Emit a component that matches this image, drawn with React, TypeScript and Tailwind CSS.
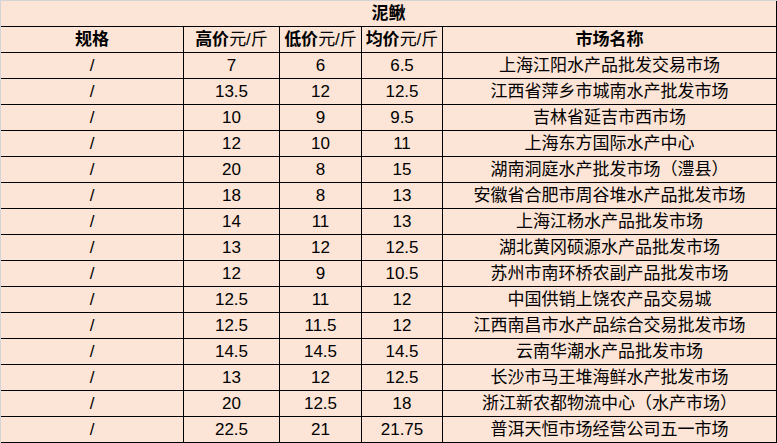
const ROWS: Array<[string, string, string, string, string]> = [
  ['/', '7', '6', '6.5', '上海江阳水产品批发交易市场'],
  ['/', '13.5', '12', '12.5', '江西省萍乡市城南水产批发市场'],
  ['/', '10', '9', '9.5', '吉林省延吉市西市场'],
  ['/', '12', '10', '11', '上海东方国际水产中心'],
  ['/', '20', '8', '15', '湖南洞庭水产批发市场（澧县）'],
  ['/', '18', '8', '13', '安徽省合肥市周谷堆水产品批发市场'],
  ['/', '14', '11', '13', '上海江杨水产品批发市场'],
  ['/', '13', '12', '12.5', '湖北黄冈硕源水产品批发市场'],
  ['/', '12', '9', '10.5', '苏州市南环桥农副产品批发市场'],
  ['/', '12.5', '11', '12', '中国供销上饶农产品交易城'],
  ['/', '12.5', '11.5', '12', '江西南昌市水产品综合交易批发市场'],
  ['/', '14.5', '14.5', '14.5', '云南华潮水产品批发市场'],
  ['/', '13', '12', '12.5', '长沙市马王堆海鲜水产批发市场'],
  ['/', '20', '12.5', '18', '浙江新农都物流中心（水产市场）'],
  ['/', '22.5', '21', '21.75', '普洱天恒市场经营公司五一市场'],
]

const cell =
  'h-[26px] border-r border-b border-black flex items-center justify-center whitespace-nowrap overflow-hidden'

function PriceHead({ label }: { label: string }) {
  return (
    <div className={cell}>
      <span className="font-bold">{label}</span>
      <span>元/斤</span>
    </div>
  )
}

export default function App() {
  return (
    <div
      className="w-[777px] h-[443px] bg-[#fce4d6] border-t border-l border-[#d4d4d4] text-[17px] leading-none text-black overflow-hidden"
      style={{ fontFamily: '"Liberation Sans", "Noto Sans CJK SC", sans-serif' }}
    >
      <div className="grid grid-cols-[183px_96px_82px_81px_334px]">
        {/* title */}
        <div className={`${cell} col-span-5 font-bold`}>泥鳅</div>

        {/* header */}
        <div className={`${cell} font-bold`}>规格</div>
        <PriceHead label="高价" />
        <PriceHead label="低价" />
        <PriceHead label="均价" />
        <div className={`${cell} font-bold`}>市场名称</div>

        {ROWS.map((r, i) =>
          r.map((v, j) => (
            <div key={`${i}-${j}`} className={cell}>
              {v}
            </div>
          ))
        )}
      </div>
    </div>
  )
}
